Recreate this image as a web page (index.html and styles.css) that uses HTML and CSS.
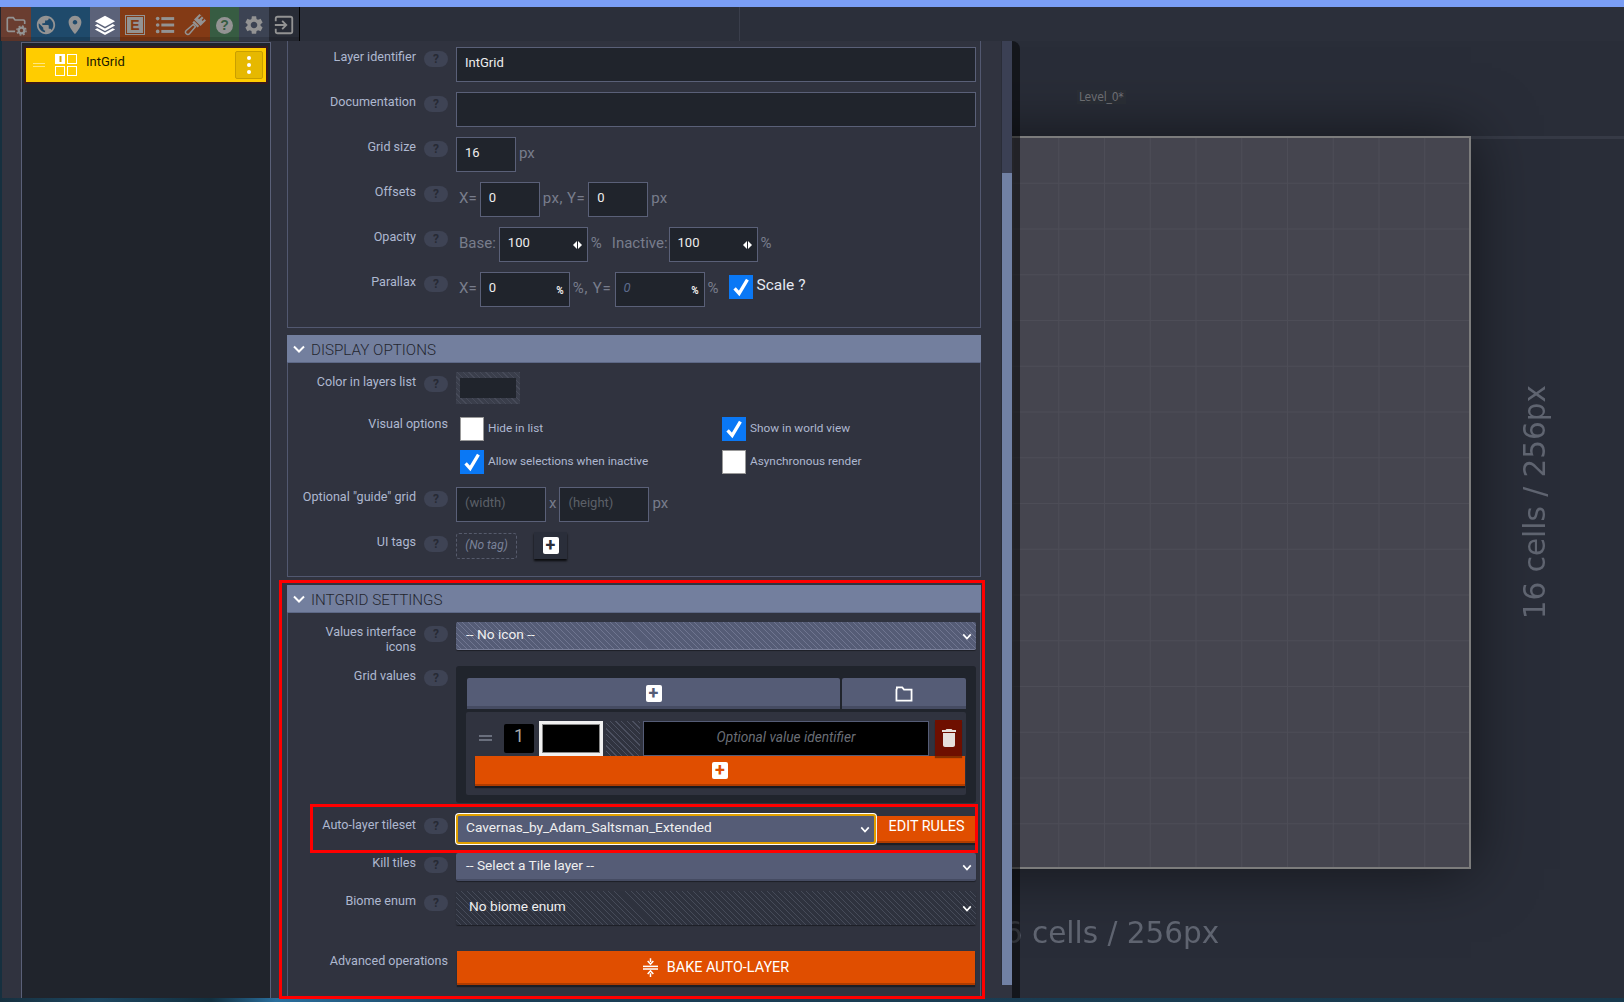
FILE: index.html
```html
<!DOCTYPE html>
<html lang="en">

<head>
    <meta charset="UTF-8">
    <title>Layer settings</title>
    <link rel="stylesheet" href="styles.css">
</head>

<body>
    <div class="title-strip"></div>

    <div class="toolbar">
        <div class="tool-group tool-project">
            <button class="tool">
                <svg viewBox="0 0 24 24" class="icon"><path d="M11 19H4a1.5 1.5 0 0 1-1.5-1.5v-12A1.5 1.5 0 0 1 4 4h5l2 2.5h9A1.5 1.5 0 0 1 21.500 8v3" fill="none" stroke="currentColor" stroke-width="1.800"/><circle cx="18" cy="18" r="3.100" fill="none" stroke="currentColor" stroke-width="2.400"/><circle cx="18" cy="18" r="5" fill="none" stroke="currentColor" stroke-width="1.500" stroke-dasharray="2 1.930"/></svg>
            </button>
        </div>
        <div class="tool-group tool-world">
            <button class="tool">
                <svg viewBox="0 0 24 24" class="icon"><path d="M12 2C6.480 2 2 6.480 2 12s4.480 10 10 10 10-4.480 10-10S17.520 2 12 2zm-1 17.930c-3.950-.490-7-3.850-7-7.930 0-.620.080-1.210.210-1.790L9 15v1c0 1.100.900 2 2 2v1.930zm6.900-2.540c-.260-.810-1-1.390-1.900-1.390h-1v-3c0-.550-.450-1-1-1H8v-2h2c.550 0 1-.450 1-1V7h2c1.100 0 2-.900 2-2v-.410c2.930 1.190 5 4.060 5 7.410 0 2.080-.800 3.970-2.100 5.390z"/></svg>
            </button>
            <button class="tool">
                <svg viewBox="0 0 24 24" class="icon"><path d="M12 2C8.130 2 5 5.130 5 9c0 5.250 7 13 7 13s7-7.750 7-13c0-3.870-3.130-7-7-7zm0 9.500c-1.380 0-2.500-1.120-2.500-2.500s1.120-2.500 2.500-2.500 2.500 1.120 2.500 2.500-1.120 2.500-2.500 2.500z"/></svg>
            </button>
        </div>
        <div class="tool-group tool-layers">
            <button class="tool tool-active">
                <svg viewBox="0 0 24 24" class="icon"><path d="M12 2 23 8l-11 6L1 8z"/><path d="M1 12.500 3.500 11 12 15.700 20.500 11l2.500 1.500-11 6z"/><path d="M1 17 3.500 15.500 12 20.200l8.500-4.700L23 17l-11 6z"/></svg>
            </button>
        </div>
        <div class="tool-group tool-defs">
            <button class="tool"><span class="enum-box"><span class="enum-letter">E</span></span></button>
            <button class="tool">
                <svg viewBox="0 0 24 24" class="icon"><circle cx="4" cy="5" r="2"/><circle cx="4" cy="12" r="2"/><circle cx="4" cy="19" r="2"/><rect x="8" y="3.400" width="14" height="3.200"/><rect x="8" y="10.400" width="14" height="3.200"/><rect x="8" y="17.400" width="14" height="3.200"/></svg>
            </button>
            <button class="tool">
                <svg viewBox="0 0 24 24" class="icon"><g transform="rotate(45 12 12)"><rect x="7" y="0" width="10" height="8.500"/><rect x="9.200" y="0" width="1.600" height="4.500" fill="#833a15"/><rect x="13.200" y="0" width="1.600" height="3" fill="#833a15"/><rect x="8" y="9.500" width="8" height="2.500"/><path d="M10.300 13h3.400l.8 10a2.500 2.500 0 0 1-5 0z" fill="none" stroke="currentColor" stroke-width="1.600"/></g></svg>
            </button>
        </div>
        <div class="tool-group tool-help">
            <button class="tool"><span class="help-round">?</span></button>
        </div>
        <div class="tool-group tool-settings">
            <button class="tool">
                <svg viewBox="0 0 24 24" class="icon"><path d="M19.140 12.940c.040-.300.060-.610.060-.940 0-.320-.020-.640-.070-.940l2.030-1.580c.180-.140.230-.410.120-.610l-1.920-3.320c-.120-.220-.370-.290-.590-.220l-2.390.960c-.500-.380-1.030-.700-1.620-.940l-.360-2.540c-.040-.240-.240-.410-.480-.410h-3.840c-.240 0-.430.170-.470.410l-.360 2.540c-.590.240-1.130.570-1.620.940l-2.390-.960c-.220-.080-.470 0-.590.220L2.740 8.870c-.120.210-.080.470.120.610l2.030 1.580c-.050.300-.090.630-.090.940s.020.640.070.940l-2.030 1.580c-.180.140-.230.410-.120.610l1.920 3.320c.120.220.370.290.590.220l2.390-.960c.500.380 1.030.700 1.620.940l.360 2.540c.050.240.240.410.480.410h3.840c.240 0 .440-.170.470-.410l.360-2.540c.590-.240 1.130-.560 1.620-.940l2.390.960c.220.080.470 0 .590-.220l1.920-3.320c.120-.220.070-.470-.120-.610l-2.010-1.580zM12 15.600c-1.980 0-3.600-1.620-3.600-3.600s1.620-3.600 3.600-3.600 3.600 1.620 3.600 3.600-1.620 3.600-3.600 3.600z"/></svg>
            </button>
        </div>
        <div class="tool-group tool-exit">
            <button class="tool">
                <svg viewBox="0 0 24 24" class="icon"><path d="M3 8V5a2 2 0 0 1 2-2h14a2 2 0 0 1 2 2v14a2 2 0 0 1-2 2H5a2 2 0 0 1-2-2v-3" fill="none" stroke="currentColor" stroke-width="2"/><path d="M2 12h12M10 7.500l4.500 4.500-4.500 4.500" fill="none" stroke="currentColor" stroke-width="2"/></svg>
            </button>
        </div>
    </div>

    <div class="main">
        <div class="layers-pane">
            <div class="layers-list">
                <div class="layer-item">
                    <span class="layer-handle"></span>
                    <svg viewBox="0 0 22 22" class="layer-icon">
                        <rect x="0" y="0" width="10" height="10" fill="#fff"/>
                        <rect x="12.500" y=".5" width="9" height="9" fill="none" stroke="#fff"/>
                        <rect x=".5" y="12.500" width="9" height="9" fill="none" stroke="#fff"/>
                        <rect x="12.500" y="12.500" width="9" height="9" fill="none" stroke="#fff"/>
                        <rect x="4.500" y="2" width="2" height="6" fill="#d8a800"/>
                    </svg>
                    <span class="layer-name">IntGrid</span>
                    <span class="layer-menu"><i></i><i></i><i></i></span>
                </div>
            </div>
        </div>

        <div class="settings-pane">
            <div class="settings-scroll">
                <section class="section section-general">
                    <div class="row">
                        <label class="label">Layer identifier</label><span class="help">?</span>
                        <div class="controls"><div class="input input-wide">IntGrid</div></div>
                    </div>
                    <div class="row">
                        <label class="label">Documentation</label><span class="help">?</span>
                        <div class="controls"><div class="input input-wide"></div></div>
                    </div>
                    <div class="row">
                        <label class="label">Grid size</label><span class="help">?</span>
                        <div class="controls"><div class="input input-s">16</div><span class="unit">px</span></div>
                    </div>
                    <div class="row">
                        <label class="label">Offsets</label><span class="help">?</span>
                        <div class="controls">
                            <span class="unit unit-first">X=</span><div class="input input-s">0</div>
                            <span class="unit unit-wide">px, Y=</span><div class="input input-s">0</div>
                            <span class="unit">px</span>
                        </div>
                    </div>
                    <div class="row">
                        <label class="label">Opacity</label><span class="help">?</span>
                        <div class="controls">
                            <span class="unit unit-first">Base:</span>
                            <div class="input input-m">100<span class="spin"><i></i><i></i></span></div>
                            <span class="unit">%</span><span class="unit unit-inactive">Inactive:</span>
                            <div class="input input-m">100<span class="spin"><i></i><i></i></span></div>
                            <span class="unit">%</span>
                        </div>
                    </div>
                    <div class="row">
                        <label class="label">Parallax</label><span class="help">?</span>
                        <div class="controls">
                            <span class="unit unit-first">X=</span>
                            <div class="input input-l">0<span class="pct">%</span></div>
                            <span class="unit unit-wider">%, Y=</span>
                            <div class="input input-l input-dim"><em>0</em><span class="pct">%</span></div>
                            <span class="unit">%</span>
                            <span class="check check-on check-scale"><svg viewBox="0 0 24 24"><path d="M5 13.500 10 19 19 4" fill="none" stroke="#fff" stroke-width="3.600"/></svg></span>
                            <span class="scale-label">Scale ?</span>
                        </div>
                    </div>
                </section>

                <header class="section-head">
                    <svg viewBox="0 0 12 8" class="head-chevron"><path d="M1 1.500 6 6.500 11 1.500" fill="none" stroke="currentColor" stroke-width="2"/></svg>
                    DISPLAY OPTIONS
                </header>
                <section class="section section-display">
                    <div class="row row-color">
                        <label class="label">Color in layers list</label><span class="help">?</span>
                        <div class="controls"><div class="color-pick"><span></span></div></div>
                    </div>
                    <div class="row row-visual">
                        <label class="label label-long">Visual options</label>
                        <div class="check-grid">
                            <div class="check-item"><span class="check"></span>Hide in list</div>
                            <div class="check-item"><span class="check check-on"><svg viewBox="0 0 24 24"><path d="M5 13.500 10 19 19 4" fill="none" stroke="#fff" stroke-width="3.600"/></svg></span>Show in world view</div>
                            <div class="check-item"><span class="check check-on"><svg viewBox="0 0 24 24"><path d="M5 13.500 10 19 19 4" fill="none" stroke="#fff" stroke-width="3.600"/></svg></span>Allow selections when inactive</div>
                            <div class="check-item"><span class="check"></span>Asynchronous render</div>
                        </div>
                    </div>
                    <div class="row row-guide">
                        <label class="label">Optional "guide" grid</label><span class="help">?</span>
                        <div class="controls">
                            <div class="input input-guide">(width)</div><span class="unit">x</span>
                            <div class="input input-guide">(height)</div><span class="unit">px</span>
                        </div>
                    </div>
                    <div class="row row-tags">
                        <label class="label">UI tags</label><span class="help">?</span>
                        <div class="controls controls-tags">
                            <div class="no-tag">(No tag)</div>
                            <button class="tag-add"><span class="plus plus-dark">+</span></button>
                        </div>
                    </div>
                </section>

                <div class="marked">
                    <div class="mark-outer"></div>
                    <header class="section-head section-head-last">
                        <svg viewBox="0 0 12 8" class="head-chevron"><path d="M1 1.500 6 6.500 11 1.500" fill="none" stroke="currentColor" stroke-width="2"/></svg>
                        INTGRID SETTINGS
                    </header>
                    <section class="section section-intgrid">
                        <div class="row row-icons">
                            <label class="label">Values interface<br>icons</label><span class="help">?</span>
                            <div class="controls">
                                <div class="select select-hatch">-- No icon --<svg viewBox="0 0 12 8" class="chevron"><path d="M1.500 1.500 6 6.500 10.500 1.500" fill="none" stroke="currentColor" stroke-width="2"/></svg></div>
                            </div>
                        </div>
                        <div class="row row-values">
                            <label class="label">Grid values</label><span class="help">?</span>
                            <div class="values-box">
                                <div class="values-actions">
                                    <button class="btn-slate btn-add"><span class="plus plus-slate">+</span></button>
                                    <button class="btn-slate btn-folder">
                                        <svg viewBox="0 0 20 18" class="folder"><path d="M2 3V1.500h6L10 4h8.500v12.500h-17V4z" fill="none" stroke="#fff" stroke-width="2"/></svg>
                                    </button>
                                </div>
                                <div class="value-card">
                                    <div class="value-row">
                                        <span class="value-handle"></span>
                                        <span class="value-num">1</span>
                                        <span class="value-color"></span>
                                        <span class="value-hatch"></span>
                                        <span class="value-id">Optional value identifier</span>
                                        <button class="value-del">
                                            <svg viewBox="0 0 24 24"><path d="M6 19c0 1.100.900 2 2 2h8c1.100 0 2-.900 2-2V7H6v12zM19 4h-3.500l-1-1h-5l-1 1H5v2h14V4z" fill="#e6e0dc"/></svg>
                                        </button>
                                    </div>
                                    <button class="value-add"><span class="plus plus-orange">+</span></button>
                                </div>
                            </div>
                        </div>
                        <div class="row row-tileset">
                            <div class="mark-inner"></div>
                            <label class="label">Auto-layer tileset</label><span class="help">?</span>
                            <div class="controls controls-tileset">
                                <div class="select select-focus">Cavernas_by_Adam_Saltsman_Extended<svg viewBox="0 0 12 8" class="chevron"><path d="M1.500 1.500 6 6.500 10.500 1.500" fill="none" stroke="currentColor" stroke-width="2"/></svg></div>
                                <button class="btn-orange btn-edit">EDIT RULES</button>
                            </div>
                        </div>
                        <div class="row row-kill">
                            <label class="label">Kill tiles</label><span class="help">?</span>
                            <div class="controls">
                                <div class="select">-- Select a Tile layer --<svg viewBox="0 0 12 8" class="chevron"><path d="M1.500 1.500 6 6.500 10.500 1.500" fill="none" stroke="currentColor" stroke-width="2"/></svg></div>
                            </div>
                        </div>
                        <div class="row row-biome">
                            <label class="label">Biome enum</label><span class="help">?</span>
                            <div class="controls">
                                <div class="select select-dark">No biome enum<svg viewBox="0 0 12 8" class="chevron"><path d="M1.500 1.500 6 6.500 10.500 1.500" fill="none" stroke="currentColor" stroke-width="2"/></svg></div>
                            </div>
                        </div>
                        <div class="row row-bake">
                            <label class="label label-long">Advanced operations</label>
                            <button class="btn-orange btn-bake">
                                <svg viewBox="0 0 16 20" class="bake-icon"><path d="M8 0v4M5 3l3 3.500L11 3M8 20v-4M5 17l3-3.500 3 3.500" fill="none" stroke="#fff" stroke-width="1.600"/><rect x="0" y="8" width="16" height="1.600" fill="#fff"/><rect x="0" y="10.800" width="16" height="1.600" fill="#fff"/></svg>
                                BAKE AUTO-LAYER
                            </button>
                        </div>
                    </section>
                </div>
            </div>
            <div class="scrollbar"><div class="scroll-thumb"></div></div>
        </div>

        <div class="canvas">
            <div class="pane-shade"></div>
            <div class="level-name">Level_0*</div>
            <div class="level-edge"></div>
            <div class="level"></div>
            <div class="size-label size-bottom">16 cells / 256px</div>
            <div class="size-label size-side">16 cells / 256px</div>
        </div>
    </div>

    <div class="desktop-strip"></div>
</body>

</html>
```

FILE: styles.css
```css
* {
    margin: 0;
    padding: 0;
    box-sizing: border-box;
}

body {
    width: 1624px;
    height: 1002px;
    overflow: hidden;
    display: flex;
    flex-direction: column;
    font-family: Roboto, "Liberation Sans", sans-serif;
    font-size: 13px;
    background-color: #2b2f3a;
    color: #aeb8d0;
}

button {
    border: none;
    font-family: inherit;
    cursor: pointer;
}

/* top bars */
.title-strip {
    height: 7px;
    background-color: #7a9ef5;
}

.toolbar {
    height: 34px;
    display: flex;
    padding-left: 1px;
    background: linear-gradient(to right, #20242c 1px, #2b2f3a 1px, #2b2f3a 739px, #3a3e4b 739px, #3a3e4b 740px, #2b2f3a 740px);
}

.tool-group {
    display: flex;
    box-shadow: inset 0 -4px 0 rgba(0, 0, 0, 0.14);
}

.tool-project { background-color: #6a3d30; }
.tool-world { background-color: #1f4a6b; }
.tool-layers { background-color: #5b6279; }
.tool-defs { background-color: #833a15; }
.tool-help { background-color: #375c42; }
.tool-settings { background-color: #3c4353; }
.tool-exit {
    background-color: #282c36;
    border-right: 1px solid #000;
}

.tool {
    width: 30px;
    height: 34px;
    display: flex;
    align-items: center;
    justify-content: center;
    padding-top: 2px;
    background: none;
    color: #939393;
}

.tool-help .tool { width: 29px; }
.tool-world .tool { width: 29.5px; }

.tool-active { color: #fff; }

.icon {
    width: 22px;
    height: 22px;
    fill: currentColor;
    display: block;
}

.enum-box {
    width: 20px;
    height: 20px;
    border: 1px solid #939393;
    padding: 1px;
    display: block;
}

.enum-letter {
    display: block;
    height: 16px;
    background-color: #939393;
    color: #833a15;
    font-family: "Liberation Sans", sans-serif;
    font-size: 14px;
    line-height: 16px;
    font-weight: bold;
    text-align: center;
}

.help-round {
    width: 17px;
    height: 17px;
    border-radius: 50%;
    background-color: #939393;
    color: #375c42;
    font-family: "Liberation Sans", sans-serif;
    font-size: 14px;
    line-height: 17px;
    font-weight: bold;
    text-align: center;
}

/* page columns */
.main {
    flex: 1;
    min-height: 0;
    display: flex;
    position: relative;
}

.layers-pane {
    width: 271px;
    padding-left: 19px;
    padding-top: 1px;
    border-left: 2px solid #16303f;
    background-color: #30333f;
}

.layers-list {
    height: 100%;
    padding: 5px 4px 0 4px;
    border-left: 1px solid #5a6078;
    border-right: 1px solid #5a6078;
    border-top: 1px solid #5a6078;
    background-color: #20242c;
}

.layer-item {
    height: 34px;
    display: flex;
    align-items: center;
    background-color: #ffcc00;
    box-shadow: 0 0 0 2px #3a1a1c;
    color: #1a1a00;
}

.layer-handle {
    width: 12px;
    height: 4px;
    margin-left: 7px;
    border-top: 1px solid #ffe680;
    border-bottom: 1px solid #ffe680;
}

.layer-icon {
    width: 22px;
    height: 22px;
    margin-left: 10px;
}

.layer-name {
    margin-left: 9px;
    flex: 1;
    margin-bottom: 7px;
}

.layer-menu {
    width: 28px;
    height: 28px;
    margin-right: 3px;
    display: flex;
    flex-direction: column;
    align-items: center;
    justify-content: center;
    gap: 3px;
    background-color: #e6b800;
    border: 1px solid #c99f00;
    border-radius: 2px;
}

.layer-menu i {
    width: 4px;
    height: 4px;
    border-radius: 50%;
    background-color: #fff;
}

.settings-pane {
    width: 741px;
    display: flex;
    background-color: #30333f;
    position: relative;
    z-index: 2;
}

.settings-scroll {
    width: 730px;
    padding-left: 16px;
}

.scrollbar {
    width: 11px;
    height: 944px;
    background-color: #3b4054;
    border-left: 1px solid #2a2d38;
    padding-top: 132px;
}

.scroll-thumb {
    height: 812px;
    background-color: #7181a4;
}

/* sections */
.section {
    width: 694px;
    padding-right: 4px;
    border-left: 1px solid #525870;
    border-right: 1px solid #525870;
    border-bottom: 1px solid #525870;
}

.section-general {
    padding-top: 6px;
    padding-bottom: 10px;
    height: 287px;
    margin-bottom: 7px;
}

.section-head {
    width: 694px;
    height: 28px;
    display: flex;
    align-items: center;
    padding-left: 6px;
    padding-top: 2px;
    background-color: #737f9e;
    color: #23262f;
    font-size: 15.2px;
    font-weight: 300;
    border-bottom: 1px solid #5d6886;
}

.head-chevron {
    width: 12px;
    height: 8px;
    margin-right: 6px;
    margin-top: -2px;
    color: #fff;
}

.section-display {
    height: 214px;
    padding-top: 9px;
    margin-bottom: 8px;
}

.section-intgrid {
    height: 384px;
    padding-top: 9px;
    border-bottom: none;
}

.marked {
    position: relative;
}

.mark-outer {
    position: absolute;
    top: -5px;
    left: -8px;
    width: 706px;
    height: 419px;
    border: 3px solid #f00;
    pointer-events: none;
    z-index: 5;
}

.mark-inner {
    position: absolute;
    top: -10px;
    left: 22px;
    width: 668px;
    height: 49px;
    border: 3px solid #f00;
    pointer-events: none;
    z-index: 5;
}

/* rows */
.row {
    display: flex;
    align-items: flex-start;
    min-height: 35px;
    margin-bottom: 10px;
    position: relative;
}

.label {
    width: 128px;
    padding-top: 2px;
    font-size: 12.6px;
    line-height: 15px;
    text-align: right;
    flex-shrink: 0;
}

.label-long {
    width: 160px;
    margin-right: 8px;
}

.help {
    width: 24px;
    height: 16px;
    margin: 4px 8px 0 8px;
    flex-shrink: 0;
    border-radius: 8px;
    background-color: #3e4354;
    color: #272a35;
    font-size: 12px;
    line-height: 16px;
    font-weight: bold;
    text-align: center;
}

.controls {
    flex: 1;
    display: flex;
    align-items: center;
    gap: 3px;
}

.input {
    height: 35px;
    display: flex;
    align-items: center;
    justify-content: space-between;
    padding: 0 8px 5px 8px;
    background-color: #20242c;
    border: 1px solid #5a6078;
    color: #eee;
    font-size: 13px;
}

.input-wide { width: 520px; }
.input-s { width: 60px; }
.input-m {
    width: 89px;
    padding-right: 5px;
}

.input-l {
    width: 90px;
    padding-right: 5px;
}

.input-dim em {
    color: #5d6b8c;
    font-size: 13px;
}

.input-guide {
    width: 90px;
    color: #5c6068;
}

.unit {
    padding-bottom: 3px;
    color: #787d8c;
    font-size: 15px;
}

.unit-first {
    margin-left: 3px;
}

.unit-wide {
    letter-spacing: 0.5px;
}

.unit-wider {
    letter-spacing: 0.8px;
}

.unit-inactive {
    margin-left: 7px;
    margin-right: -2px;
}

.spin {
    display: flex;
    gap: 1px;
    margin-top: 6px;
}

.spin i {
    display: block;
    width: 0;
    height: 0;
    border-top: 4px solid transparent;
    border-bottom: 4px solid transparent;
    border-right: 4px solid #fff;
}

.spin i + i {
    border-right: none;
    border-left: 4px solid #fff;
}

.pct {
    font-size: 10px;
    font-weight: bold;
    color: #eee;
    margin-top: 7px;
}

.check {
    width: 24px;
    height: 24px;
    flex-shrink: 0;
    display: block;
    background-color: #fff;
    border: 1px solid #999;
}

.check-on {
    background-color: #0a78f5;
    border-color: #0a78f5;
}

.check svg {
    display: block;
    width: 22px;
    height: 22px;
}

.check-scale {
    margin-left: 7px;
    margin-top: -6px;
}

.scale-label {
    margin-left: 1px;
    margin-top: -10px;
    color: #e4e8f2;
    font-size: 15.500px;
}

/* display options */
.row-color {
    min-height: 32px;
    margin-bottom: 13px;
}

.color-pick {
    width: 64px;
    height: 32px;
    padding: 6px 4px;
    background: repeating-linear-gradient(45deg, #3a3e4b 0, #3a3e4b 3px, #474b59 3px, #474b59 4px);
}

.color-pick span {
    display: block;
    height: 20px;
    background-color: #20242c;
}

.row-visual {
    min-height: 57px;
    margin-bottom: 13px;
}

.row-visual .label {
    padding-top: 0;
    margin-top: -1px;
}

.check-grid {
    display: grid;
    grid-template-columns: 262px 200px;
    row-gap: 9px;
    margin-left: 4px;
}

.check-item {
    height: 24px;
    display: flex;
    align-items: flex-start;
    gap: 4px;
    font-size: 11.8px;
    line-height: 22px;
}

.row-tags {
    min-height: 27px;
    margin-bottom: 0;
}

.controls-tags {
    gap: 17px;
}

.no-tag {
    width: 61px;
    height: 26px;
    border: 1px dashed #565b6c;
    border-radius: 3px;
    color: #7a8299;
    font-size: 12px;
    font-style: italic;
    line-height: 22px;
    text-align: center;
}

.tag-add {
    width: 33px;
    height: 27px;
    display: flex;
    align-items: center;
    justify-content: center;
    background-color: #2a2e3a;
    box-shadow: 0 2px 2px rgba(0, 0, 0, 0.8);
}

.plus {
    width: 16px;
    height: 17px;
    display: block;
    border-radius: 2px;
    background-color: #fff;
    font-size: 18px;
    line-height: 16px;
    font-weight: bold;
    text-align: center;
}

.plus-dark { color: #2a2e3a; }
.plus-slate { color: #555c76; }
.plus-orange { color: #e04e00; }

/* selects */
.select {
    width: 100%;
    height: 28px;
    display: flex;
    align-items: center;
    justify-content: space-between;
    padding: 0 4px 3px 10px;
    background-color: #555c76;
    border-bottom: 2px solid #454b62;
    border-radius: 2px;
    color: #f0f0f0;
    font-size: 13.7px;
    box-shadow: 0 1px 1px rgba(0, 0, 0, 0.4);
}

.chevron {
    width: 10px;
    height: 7px;
    color: #fff;
    margin-top: 5px;
}

.select-hatch {
    background: repeating-linear-gradient(45deg, #555c76 0, #555c76 3.300px, #6f7590 3.300px, #6f7590 4px);
    border-bottom: 1px solid #7a809a;
}

.select-dark {
    height: 34px;
    padding-left: 13px;
    padding-bottom: 4px;
    background: repeating-linear-gradient(45deg, #2e323e 0, #2e323e 3.300px, #464b59 3.300px, #464b59 4px);
    border-bottom: none;
}

.select-focus {
    width: 420px;
    height: 30px;
    background-color: #555c76;
    border: 2px solid #e0a000;
    box-shadow: 0 0 0 1px #fff;
    border-radius: 3px;
    padding-left: 8px;
    padding-bottom: 4px;
    flex-shrink: 0;
}

/* intgrid settings */
.row-icons {
    min-height: 28px;
    height: 28px;
    margin-bottom: 16px;
}

.row-values {
    margin-bottom: 11px;
}

.values-box {
    width: 520px;
    height: 137px;
    padding: 12px 10px 0 10px;
    background-color: #20242c;
    border-radius: 3px;
}

.values-actions {
    display: flex;
    gap: 2px;
    margin-left: 1px;
}

.btn-slate {
    height: 31px;
    display: flex;
    align-items: center;
    justify-content: center;
    padding-top: 3px;
    background-color: #555c76;
    border-bottom: 3px solid #454b62;
    border-radius: 2px 2px 0 0;
}

.btn-add { width: 373px; }
.btn-folder { width: 124px; }

.folder {
    width: 20px;
    height: 16px;
}

.value-card {
    width: 500px;
    height: 83px;
    margin-top: 3px;
    background-color: #30333f;
    border-radius: 2px;
    padding-top: 8px;
}

.value-row {
    height: 36px;
    display: flex;
    align-items: center;
}

.value-handle {
    width: 13px;
    height: 6px;
    margin-left: 13px;
    border-top: 2px solid #6a6f7d;
    border-bottom: 2px solid #6a6f7d;
}

.value-num {
    width: 30px;
    height: 29px;
    margin-left: 12px;
    background-color: #000;
    border-radius: 2px;
    color: #a8a8a8;
    font-size: 18px;
    line-height: 24px;
    text-align: center;
}

.value-color {
    width: 64px;
    height: 35px;
    margin-left: 5px;
    background-color: #000;
    border: 3px solid #f0f0f0;
    outline: 1px solid #888;
    outline-offset: -4px;
}

.value-hatch {
    width: 34px;
    height: 35px;
    margin-left: 3px;
    background: repeating-linear-gradient(45deg, #30333f 0, #30333f 3px, #4c5060 3px, #4c5060 4px);
}

.value-id {
    width: 286px;
    height: 35px;
    margin-left: 3px;
    background-color: #000;
    border: 1px solid #555c76;
    color: #6a6e76;
    font-size: 13.700px;
    font-style: italic;
    line-height: 30px;
    text-align: center;
}

.value-del {
    width: 27px;
    height: 36px;
    margin-left: 6px;
    display: flex;
    align-items: center;
    justify-content: center;
    background-color: #6e0f00;
    box-shadow: 0 2px 1px rgba(0, 0, 0, 0.4);
}

.value-del svg {
    width: 24px;
    height: 24px;
}

.value-add {
    display: flex;
    align-items: center;
    justify-content: center;
    width: 490px;
    height: 30px;
    margin-left: 9px;
    background-color: #e04e00;
    border-bottom: 2px solid #b03c00;
    box-shadow: 0 2px 1px rgba(0, 0, 0, 0.5);
}

.row-tileset {
    min-height: 29px;
    margin-bottom: 9px;
}

.row-tileset .label {
    padding-top: 3px;
}

.controls-tileset {
    gap: 1px;
}

.btn-orange {
    background-color: #e04e00;
    border-bottom: 2px solid #b03c00;
    color: #fff;
    font-size: 14.400px;
    box-shadow: 0 2px 1px rgba(0, 0, 0, 0.4);
}

.btn-edit {
    width: 99px;
    height: 27px;
    padding-bottom: 4px;
}

.row-kill {
    min-height: 28px;
}

.row-biome {
    min-height: 34px;
    margin-bottom: 26px;
}

.btn-bake {
    width: 518px;
    height: 34px;
    margin-left: 1px;
    display: flex;
    align-items: center;
    justify-content: center;
    gap: 9px;
}

.bake-icon {
    width: 15px;
    height: 19px;
}

/* level canvas */
.canvas {
    flex: 1;
    position: relative;
    overflow: hidden;
    background-color: #292d38;
}

.pane-shade {
    position: absolute;
    top: 0;
    left: 0;
    bottom: 0;
    width: 8px;
    border-top-right-radius: 8px;
    background-color: rgba(0, 0, 0, 0.5);
    z-index: 3;
}

.level-name {
    position: absolute;
    left: 65px;
    top: 49px;
    padding: 0 2px;
    background-color: rgba(60, 60, 60, 0.2);
    color: #737478;
    font-family: "DejaVu Sans", sans-serif;
    font-size: 12px;
    font-stretch: condensed;
    letter-spacing: -0.2px;
}

.level-edge {
    position: absolute;
    left: 459px;
    right: 0;
    top: 95px;
    height: 3px;
    background-color: #363a46;
}

.level {
    position: absolute;
    left: -275px;
    top: 95px;
    width: 734px;
    height: 733px;
    border: 2px solid #7c7c7c;
    background-color: #45454f;
    background-image:
        linear-gradient(to right, transparent calc(100% - 1px), #4d4d57 0),
        linear-gradient(to bottom, transparent calc(100% - 1px), #4d4d57 0);
    background-size: 45.75px 45.75px;
    box-shadow: 0 0 60px rgba(0, 0, 0, 0.55);
}

.size-label {
    position: absolute;
    white-space: nowrap;
    color: #5f6470;
    font-family: "DejaVu Sans", sans-serif;
    font-size: 29.5px;
    filter: blur(0.4px);
}

.size-bottom {
    left: -27px;
    top: 875px;
}

.size-side {
    left: 506px;
    top: 344px;
    writing-mode: vertical-rl;
    transform: rotate(180deg);
}

.desktop-strip {
    height: 4px;
    position: relative;
    z-index: 1;
    background: linear-gradient(to right, #16303f 0, #1d4660 6%, #123040 13%, #2a6f9e 17%, #1b3f57 30%, #18394d 100%);
}
```
